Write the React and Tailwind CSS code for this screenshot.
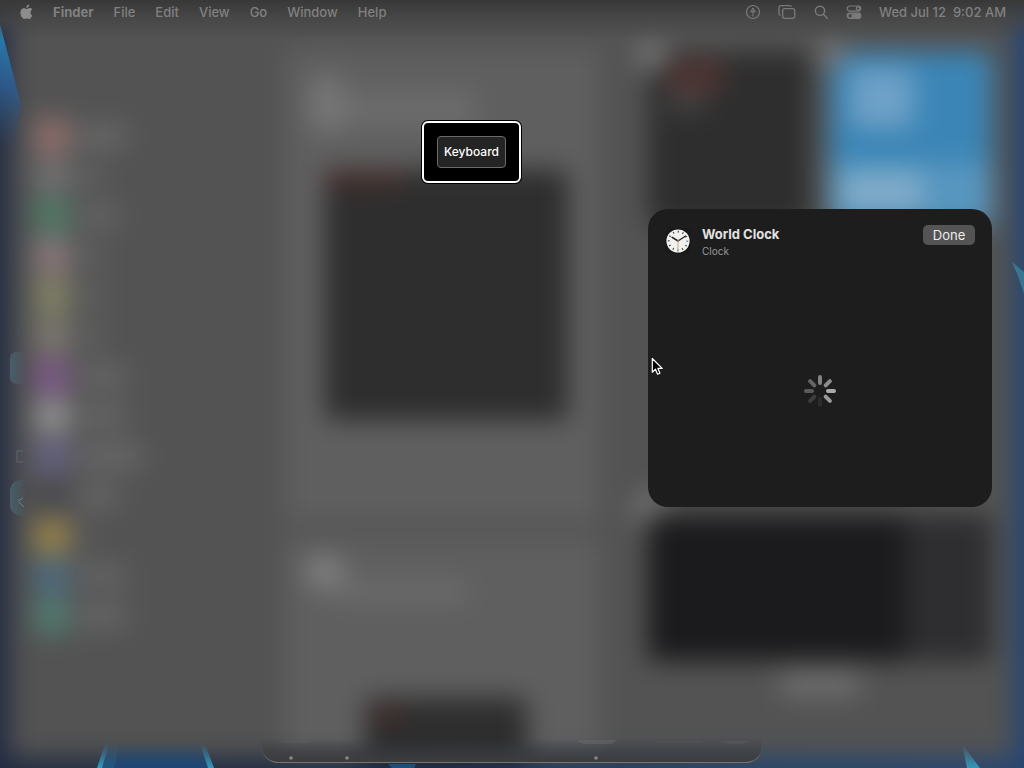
import React from "react";

const MENUS = ["File", "Edit", "View", "Go", "Window", "Help"];

const SIDEBAR_ITEMS = [
  { icon: "bg-[#8e6e6b]", label: "w-12 bg-[#686868]" },
  { icon: "bg-[#707070]", label: "w-6 bg-[#626262]" },
  { icon: "bg-[#507a66]", label: "w-10 bg-[#646464]" },
  { icon: "bg-[#8a787b]", label: "w-6 bg-[#626262]" },
  { icon: "bg-[#838366]", label: "w-6 bg-[#626262]" },
  { icon: "bg-[#7c786f]", label: "w-6 bg-[#626262]" },
  { icon: "bg-[#7c5887]", label: "w-12 bg-[#666666]" },
  { icon: "bg-[#8e8e8e]", label: "w-12 bg-[#666666]" },
  { icon: "bg-[#64617f]", label: "w-16 bg-[#686868]" },
  { icon: "bg-[#4a4a4e]", label: "w-10 bg-[#666666]" },
  { icon: "bg-[#96824b]", label: "w-4 bg-[#5a5a5a]" },
  { icon: "bg-[#4e6b7e]", label: "w-12 bg-[#646464]" },
  { icon: "bg-[#527a70]", label: "w-12 bg-[#666666]" },
];

function Wallpaper() {
  return (
    <svg aria-hidden="true" viewBox="0 0 1024 768" preserveAspectRatio="none" className="absolute inset-0 h-full w-full">
      <defs>
        <linearGradient id="wall" x1="0" x2="1" y1="0" y2="0">
          <stop offset="0" stopColor="#222c42" />
          <stop offset="0.4" stopColor="#1c2a44" />
          <stop offset="0.75" stopColor="#23456e" />
          <stop offset="1" stopColor="#274672" />
        </linearGradient>
      </defs>
      <rect width="1024" height="768" fill="url(#wall)" />
    </svg>
  );
}

function DesktopHighlights() {
  return (
    <svg aria-hidden="true" viewBox="0 0 1024 768" preserveAspectRatio="none" className="absolute inset-0 h-full w-full">
      <defs>
        <linearGradient id="beam" x1="0" x2="0" y1="0" y2="1">
          <stop offset="0" stopColor="#2784b8" />
          <stop offset="0.5" stopColor="#2c5f97" stopOpacity="0.8" />
          <stop offset="1" stopColor="#2d4a70" stopOpacity="0" />
        </linearGradient>
        <linearGradient id="glow" x1="0" x2="0" y1="0" y2="1">
          <stop offset="0" stopColor="#2c5c86" stopOpacity="0" />
          <stop offset="1" stopColor="#1b4676" />
        </linearGradient>
        <linearGradient id="edge" x1="0" x2="0" y1="0" y2="1">
          <stop offset="0" stopColor="#4b8fa6" stopOpacity="0" />
          <stop offset="1" stopColor="#3498b8" />
        </linearGradient>
        <linearGradient id="tile" x1="0" x2="1" y1="0" y2="0">
          <stop offset="0" stopColor="#4f7682" stopOpacity="0.6" />
          <stop offset="1" stopColor="#56707b" stopOpacity="0" />
        </linearGradient>
      </defs>
      <path d="M0 24 L21 104 L14 150 H0 Z" fill="url(#beam)" />
      <path d="M97 768 L105 742 H204 L214 768 Z" fill="url(#glow)" />
      <path d="M97 768 L105 744 H109 L102 768 Z" fill="url(#edge)" />
      <path d="M102 768 L109 744 H120 L114 768 Z" fill="url(#edge)" opacity="0.2" />
      <path d="M214 768 L205 744 H200 L208 768 Z" fill="url(#edge)" />
      <path d="M962 744 L967 768 H980 Z" fill="url(#edge)" />
      <path d="M388 764 H416 L414 768 H392 Z" fill="#1c5f94" opacity="0.7" />
      <path d="M1012 262 L1024 272 V294 L1018 276 Z" fill="#3a92ad" opacity="0.6" />
      <path d="M26 352 H15 Q10 353 10 360 V377 Q10 384 17 384 H26 Z" fill="url(#tile)" />
      <path d="M26 480 H19 Q10 482 10 492 V506 Q11 514 20 516 H26 Z" fill="url(#tile)" />
      <path d="M18 501 L23 498 M19 502 L24 507" stroke="#7b9a9a" fill="none" opacity="0.7" />
      <path d="M17 451 H23 M17 451 V462 H23" stroke="#77797b" fill="none" opacity="0.6" />
    </svg>
  );
}

function WidgetGallery() {
  return (
    <div aria-hidden="true" className="absolute -top-10 right-[10px] bottom-[10px] left-[10px] flex bg-[#535353] blur-[13px]">
      <div className="w-[275px] shrink-0 pt-[156px] pl-6">
        {SIDEBAR_ITEMS.map((item, i) => (
          <div key={i} className="flex h-10 items-center gap-2">
            <div className={`size-9 rounded-md ${item.icon}`} />
            <div className={`h-6 ${item.label}`} />
          </div>
        ))}
      </div>

      <div className="flex w-[315px] shrink-0 flex-col gap-4 pt-[88px]">
        <div className="h-[474px] bg-[#5f5f5f] pt-[26px] pr-8 pl-10">
          <div className="-ml-4 flex h-24">
            <div className="h-[60px] w-9 rounded-full bg-[#767676]" />
            <div className="mt-4 h-10 w-[130px] bg-[#6b6b6b]" />
          </div>
          <div className="h-[250px] w-full rounded-lg bg-[#2e2e2e]">
            <div className="h-5 w-20 rounded bg-[#412c2a]" />
          </div>
        </div>
        <div className="flex flex-1 flex-col bg-[#5f5f5f] px-5 pt-4">
          <div className="h-9 w-10 rounded-full bg-[#7e7e7e]" />
          <div className="-mt-2 ml-8 h-5 w-[130px] bg-[#6c6c6c]" />
          <div className="mt-24 ml-[60px] w-[162px] flex-1 rounded-t-lg bg-[#2e2e2e] p-2">
            <div className="h-5 w-8 bg-[#402c2a]" />
          </div>
        </div>
      </div>

      <div className="flex min-w-0 flex-1 flex-col items-center pt-[92px] pr-[22px] pl-12">
        <div className="grid w-full grid-cols-2 gap-5">
          <div className="relative h-[175px] min-w-0 rounded-lg bg-[#2e2e2e] px-5 py-2">
            <div className="absolute -top-3 -left-3 size-8 rounded-full bg-[#747474]" />
            <div className="h-8 w-[56px] bg-[#4e3431]" />
            <div className="h-5 w-9 bg-[#454545]" />
          </div>
          <div className="relative flex h-[175px] min-w-0 flex-col justify-between rounded-lg bg-[#3b85b6] pt-4 pl-5">
            <div className="absolute -top-3 -left-3 size-7 rounded-full bg-[#777777]" />
            <div className="h-[60px] w-16 rounded-lg bg-[#6ea1c7]" />
            <div className="-ml-5 h-16 bg-[#5796bf] pt-2 pl-3">
              <div className="h-10 w-20 bg-[#80abc8]" />
            </div>
          </div>
        </div>
        <div className="relative mt-[288px] h-[146px] w-full rounded-lg bg-[#2e2e30]">
          <div className="absolute -top-6 -left-4 size-9 rounded-full bg-[#727272]" />
          <div className="relative h-full w-3/4 rounded-lg bg-[#1b1b1d]" />
        </div>
        <div className="mt-2 h-7 w-20 rounded bg-[#6c6c6c]" />
      </div>
    </div>
  );
}

function Dock() {
  return (
    <div
      aria-hidden="true"
      className="absolute bottom-[5px] left-1/2 flex h-10 w-[500px] -translate-x-1/2 items-end rounded-b-2xl border-b border-[#77736f] bg-linear-to-b from-transparent from-40% to-[#3d3d3d]"
    >
      <svg viewBox="0 0 500 40" className="h-10 w-full">
        <g fill="#757573" opacity="0.35">
          <path d="M18 19 H48 L45 21 H22 Z" opacity="0.5" />
          <path d="M316 18 H354 Q352 22 346 22 H324 Q318 22 316 18 Z" />
          <path d="M391 19 H440 L436 21 H396 Z" opacity="0.3" />
          <path d="M459 19 H487 Q484 22 480 22 H466 Z" opacity="0.5" />
        </g>
        <g fill="#8c8682">
          <circle cx="29" cy="36" r="1.8" />
          <circle cx="85" cy="36" r="1.8" />
          <circle cx="334" cy="36" r="1.8" />
        </g>
      </svg>
    </div>
  );
}

function MenuBar() {
  return (
    <header className="relative flex h-6 items-center justify-between pr-[18px] pl-5 text-[13px] leading-6 font-medium text-[#808080]">
      <nav aria-label="Menu bar" className="flex items-center gap-5">
        <button type="button" aria-label="Apple menu">
          <svg viewBox="0 0 13 16" className="h-4 w-[13px]" fill="#8c8c8c">
            <path d="M9.1 0.4 C9.2 1.4 8.8 2.3 8.2 2.9 C7.6 3.6 6.8 3.9 6.3 3.8 C6.2 2.9 6.6 2 7.1 1.5 C7.7 0.8 8.5 0.5 9.1 0.4 Z" />
            <path d="M12.2 11.5 C11.6 13.1 10.5 15 9.2 15 C8.3 15 8 14.4 6.8 14.4 C5.6 14.4 5.2 15 4.3 15 C2.5 15 0.4 11.8 0.4 8.6 C0.4 5.8 2 4.2 3.9 4.2 C5.1 4.2 5.9 4.9 6.7 4.9 C7.4 4.9 8.4 4.1 9.8 4.1 C10.3 4.1 11.6 4.3 12.3 5.5 C9.9 6.9 10.2 10.3 12.2 11.5 Z" />
          </svg>
        </button>
        <button type="button" className="font-bold">Finder</button>
        {MENUS.map((name) => (
          <button type="button" key={name}>{name}</button>
        ))}
      </nav>
      <div className="flex items-center gap-[17px]">
        <button type="button" aria-label="Location">
          <svg viewBox="0 0 16 16" className="size-4" fill="none" stroke="#7a7a7a">
            <circle cx="8" cy="8" r="6.5" strokeWidth="1.2" />
            <path d="M8 3.8 V12.4 M8 4 L5.6 7.8 H10.4 Z" />
          </svg>
        </button>
        <button type="button" aria-label="Stage Manager">
          <svg viewBox="0 0 18 16" className="h-4 w-[18px]" fill="none" stroke="#7a7a7a" strokeWidth="1.3">
            <rect x="4.7" y="4.7" width="12" height="9.6" rx="2" />
            <path d="M2.6 11.5 Q1 11 1 9.5 V3.6 Q1 1.6 3 1.6 H11.6 Q13.4 1.6 13.6 2.6" />
          </svg>
        </button>
        <button type="button" aria-label="Search">
          <svg viewBox="0 0 16 16" className="size-4" fill="none" stroke="#7a7a7a" strokeWidth="1.4">
            <circle cx="7" cy="6.8" r="4.6" />
            <path d="M10.4 10.3 L14.2 14.2" strokeLinecap="round" />
          </svg>
        </button>
        <button type="button" aria-label="Control Center">
          <svg viewBox="0 0 16 16" className="size-4" fill="none" stroke="#7a7a7a" strokeWidth="1.2">
            <rect x="1.2" y="2" width="13.6" height="5.2" rx="2.6" />
            <circle cx="12" cy="4.6" r="1.7" />
            <rect x="1.2" y="9.2" width="13.6" height="5.2" rx="2.6" fill="#7a7a7a" />
            <circle cx="4.2" cy="11.8" r="1.7" fill="#484848" stroke="none" />
          </svg>
        </button>
        <time className="whitespace-pre">Wed Jul 12  9:02 AM</time>
      </div>
    </header>
  );
}

function ClockIcon() {
  return (
    <svg aria-hidden="true" viewBox="0 0 26 26" className="size-[26px]">
      <rect width="26" height="26" rx="6" fill="#19191a" />
      <circle cx="13" cy="13" r="11.6" fill="#f1f1f0" />
      <circle cx="13" cy="13" r="9.2" fill="none" stroke="#555" strokeWidth="2" strokeDasharray="1.2 3.617" strokeDashoffset="0.6" />
      <path d="M13 13 L7.2 9.4" stroke="#222" strokeWidth="1.6" strokeLinecap="round" />
      <path d="M13 13 L20.6 8" stroke="#222" strokeWidth="1.3" strokeLinecap="round" />
      <path d="M13 11 V23" stroke="#c9a98c" strokeWidth="1" />
    </svg>
  );
}

const SPOKES = ["#828282", "#8c8c8c", "#a9a9a9", "#999999", "#2c2c2d", "#3e3e3f", "#5a5a5b", "#656566"];

function Spinner() {
  return (
    <svg role="img" aria-label="Loading" viewBox="-16 -16 32 32" className="size-8">
      {SPOKES.map((color, i) => (
        <path key={i} d="M0 -8 V-14" stroke={color} strokeWidth="4" strokeLinecap="round" transform={`rotate(${i * 45})`} />
      ))}
    </svg>
  );
}

function WorldClockDialog() {
  return (
    <section
      role="dialog"
      aria-labelledby="widget-title"
      className="absolute top-[209px] right-8 flex min-h-[298px] w-[344px] flex-col rounded-[20px] bg-[#1d1d1e] px-[17px]"
    >
      <header className="flex h-[66px] items-start pt-4">
        <div className="mt-[3px]">
          <ClockIcon />
        </div>
        <div className="ml-[11px] flex-1">
          <h1 id="widget-title" className="text-[13px] leading-[18px] font-bold text-[#e2e2e2]">World Clock</h1>
          <p className="text-[10px] leading-4 text-[#98989a]">Clock</p>
        </div>
        <button type="button" className="h-5 w-[52px] rounded-[5px] bg-[#545455] text-[13px] leading-5 text-[#ececec]">
          Done
        </button>
      </header>
      <div className="flex flex-1 items-center justify-center">
        <Spinner />
      </div>
    </section>
  );
}

function VoiceOverCaption() {
  return (
    <div
      role="status"
      className="absolute top-[121px] left-[422px] rounded-md border-2 border-white bg-black p-[13px] ring-1 ring-black"
    >
      <div className="rounded-sm border border-[#6b6b6b] bg-[#242424] px-[6px] text-xs leading-[30px] font-medium text-white">
        Keyboard
      </div>
    </div>
  );
}

function Pointer() {
  return (
    <svg aria-hidden="true" viewBox="0 0 13 19" className="absolute top-[357px] left-[651px] h-[19px] w-[13px]">
      <path
        d="M1.3 1.5 V15.2 L4.5 12.2 L6.6 17.2 L9 16.2 L6.9 11.4 H11.2 Z"
        fill="#050505"
        stroke="#ffffff"
        strokeWidth="1.2"
        strokeLinejoin="round"
      />
    </svg>
  );
}

export default function App() {
  return (
    <main className="relative min-h-screen w-full overflow-hidden font-['Inter','Liberation_Sans',sans-serif]">
      <Wallpaper />
      <WidgetGallery />
      <Dock />
      <DesktopHighlights />
      <div aria-hidden="true" className="absolute inset-x-0 top-0 h-10 bg-linear-to-b from-[#383838] via-[#444444]/70 to-transparent" />
      <MenuBar />
      <VoiceOverCaption />
      <WorldClockDialog />
      <Pointer />
    </main>
  );
}
